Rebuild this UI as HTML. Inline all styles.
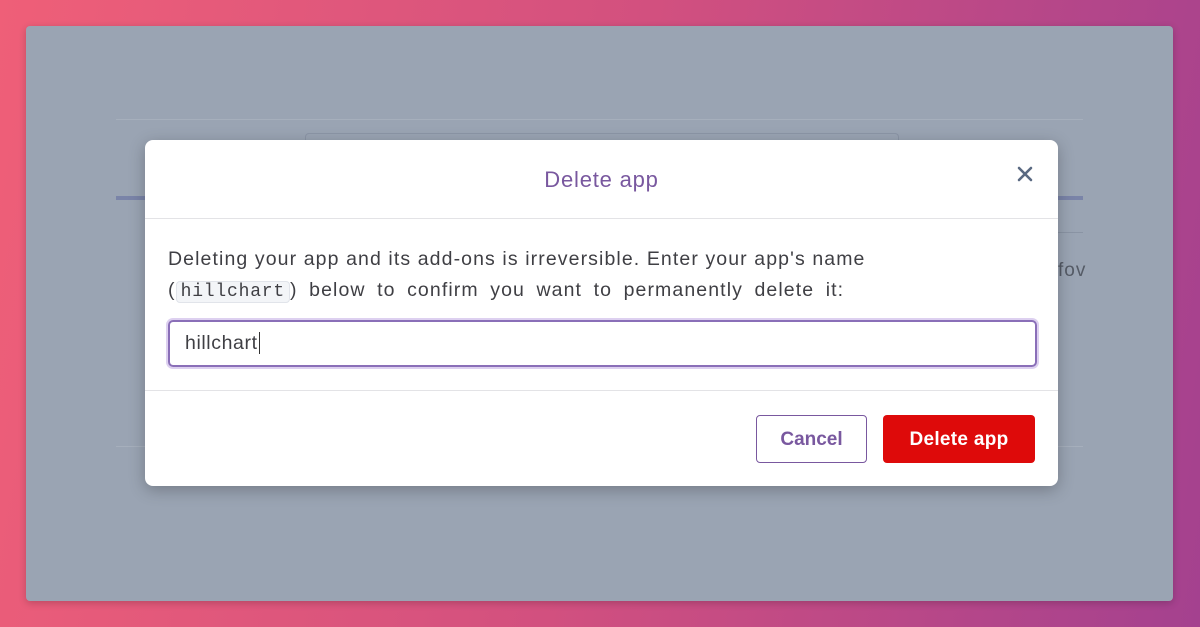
<!DOCTYPE html>
<html><head><style>
body{margin:0;width:1200px;height:627px;overflow:hidden;background:linear-gradient(100deg,#ef5f78 0%,#d2507f 50%,#a4418f 100%);font-family:"Liberation Sans",sans-serif;position:relative}
.panel{position:absolute;left:26px;top:26px;width:1147px;height:575px;background:#9aa4b3;border-radius:4px;box-shadow:0 2px 8px rgba(0,0,0,.2)}
.a{position:absolute}
.modal{position:absolute;left:145px;top:140px;width:913px;height:346px;background:#fff;border-radius:8px;box-shadow:0 4px 16px rgba(0,0,0,.25)}
</style></head><body>
<div class="panel"></div>
<div class="a" style="left:116px;top:119px;width:967px;height:1px;background:#a6afbc"></div>
<div class="a" style="left:305px;top:133px;width:592px;height:10px;border:1px solid #8b95a6;border-bottom:none;border-radius:4px 4px 0 0"></div>
<div class="a" style="left:116px;top:196px;width:967px;height:4px;background:#7a84a8"></div>
<div class="a" style="left:1058px;top:232px;width:25px;height:1px;background:#8a94a4"></div>
<div class="a" style="left:116px;top:446px;width:967px;height:1px;background:#a6afbc"></div>
<div class="a" style="left:1058px;top:260px;font-size:19px;color:#555b66;letter-spacing:1px">fov</div>
<div class="modal">
 <div class="a" style="left:0;right:0;top:27px;text-align:center;font-size:22px;color:#79589f;letter-spacing:0.8px">Delete app</div>
 <svg class="a" style="left:872px;top:26px" width="16" height="16" viewBox="0 0 16 16"><path d="M2 2L14 14M14 2L2 14" stroke="#596981" stroke-width="2.6" stroke-linecap="round"/></svg>
 <div class="a" style="left:0;right:0;top:78px;height:1px;background:#e3e3e6"></div>
 <div class="a" style="left:23px;top:104px;font-size:19.5px;letter-spacing:1.1px;line-height:31px;color:#3f3f44;width:890px;white-space:nowrap">Deleting your app and its add-ons is irreversible. Enter your app's name<br><span style="word-spacing:5px">(<span style="font-family:'Liberation Mono',monospace;font-size:18px;letter-spacing:0.8px;background:#f3f5f8;border:1px solid #e1e4ea;border-radius:4px;padding:0 4px">hillchart</span>) below to confirm you want to permanently delete it:</span></div>
 <div class="a" style="left:23px;top:180px;height:43px;border:2px solid #8a6fb8;border-radius:5px;box-shadow:0 0 0 2px #ddd0f0;font-size:19.5px;letter-spacing:0.6px;line-height:43px;padding-left:15px;width:850px;color:#3f3f44">hillchart<span style="border-left:1px solid #333;margin-left:1px"></span></div>
 <div class="a" style="left:0;right:0;top:250px;height:1px;background:#e3e3e6"></div>
 <div class="a" style="left:611px;top:275px;width:109px;height:46px;border:1px solid #79589f;border-radius:4px;color:#79589f;font-size:19px;font-weight:bold;text-align:center;line-height:48px">Cancel</div>
 <div class="a" style="left:738px;top:275px;width:152px;height:48px;background:#de0a0a;border-radius:4px;color:#fff;font-size:19px;font-weight:bold;text-align:center;line-height:50px;letter-spacing:0.3px">Delete app</div>
</div>
</body></html>
